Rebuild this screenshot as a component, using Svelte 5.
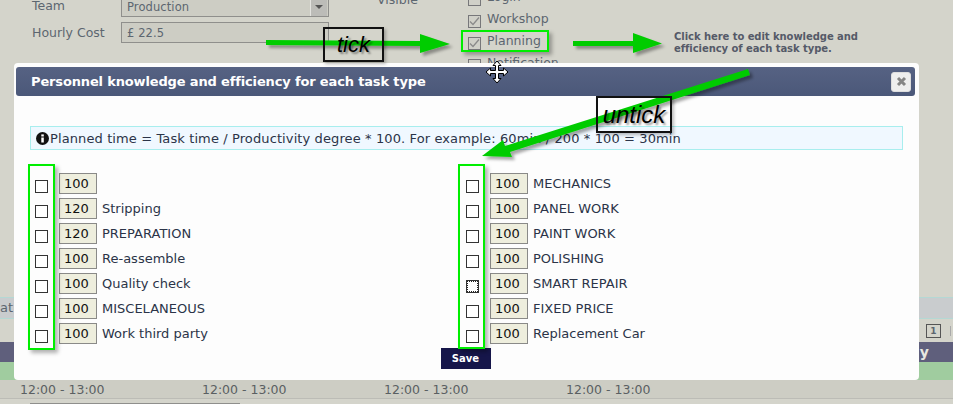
<script>
  const visibleIn = [
    { name: 'Login', on: false },
    { name: 'Workshop', on: true },
    { name: 'Planning', on: true },
    { name: 'Notification', on: false }
  ]
  const left = [
    { name: '', val: 100 },
    { name: 'Stripping', val: 120 },
    { name: 'PREPARATION', val: 120 },
    { name: 'Re-assemble', val: 100 },
    { name: 'Quality check', val: 100 },
    { name: 'MISCELANEOUS', val: 100 },
    { name: 'Work third party', val: 100 }
  ]
  const right = [
    { name: 'MECHANICS', val: 100 },
    { name: 'PANEL WORK', val: 100 },
    { name: 'PAINT WORK', val: 100 },
    { name: 'POLISHING', val: 100 },
    { name: 'SMART REPAIR', val: 100, focus: true },
    { name: 'FIXED PRICE', val: 100 },
    { name: 'Replacement Car', val: 100 }
  ]
  const columns = [left, right]
  const times = [0, 1, 2, 3]
</script>

<div class="page">
  <section class="form">
    <div class="fields">
      <div class="label">Team</div>
      <div class="select">Production<span class="drop"><i></i></span></div>
      <div class="label">Hourly Cost</div>
      <div class="field">£ 22.5</div>
    </div>
    <div class="visible-label">Visible</div>
    <div class="checks">
      {#each visibleIn as item}
        <div class="check">
          <span class="box">
            {#if item.on}
              <svg width="11" height="11" viewBox="0 0 11 11"><path d="M1 5.5 L4 8.5 L10 1.5" fill="none" stroke="#8a8a8a" stroke-width="1.3" /></svg>
            {/if}
          </span>
          {item.name}
        </div>
      {/each}
    </div>
  </section>

  <section class="table">
    <div class="days"><span>at</span></div>
    <div class="pager"><span class="num">1</span><span class="sep"></span></div>
    <div class="head"><span>y</span></div>
    <div class="green"></div>
    <div class="hours">
      {#each times as t}
        <span>12:00 - 13:00</span>
      {/each}
    </div>
    <div class="next"><span class="next-input"></span></div>
  </section>

  <div class="modal">
    <header class="title">
      <span>Personnel knowledge and efficiency for each task type</span>
      <button class="close" aria-label="Close">
        <svg width="11" height="11" viewBox="0 0 11 11"><path d="M2 2 L9 9 M9 2 L2 9" stroke="#858585" stroke-width="3" /></svg>
      </button>
    </header>
    <div class="notice">
      <svg width="13" height="13" viewBox="0 0 13 13"><circle cx="6.5" cy="6.5" r="6.5" fill="#111" /><rect x="5.3" y="5.5" width="2.5" height="5" fill="#fff" /><rect x="5.3" y="2.4" width="2.5" height="2.1" fill="#fff" /></svg>
      <span>Planned time = Task time / Productivity degree * 100. For example: 60min / 200 * 100 = 30min</span>
    </div>
    <div class="types">
      {#each columns as col}
        <div class="col">
          {#each col as row}
            <div class="row">
              <span class="tick" class:focus={row.focus}></span>
              <input class="num-input" value={row.val} />
              <span class="name">{row.name}</span>
            </div>
          {/each}
        </div>
      {/each}
    </div>
    <button class="save">Save</button>
  </div>

  <!-- annotations drawn on top of the screenshot -->
  <div class="mark planning"></div>
  <div class="mark left-col"></div>
  <div class="mark right-col"></div>
  <svg class="arrows" width="953" height="404" viewBox="0 0 953 404">
    <defs>
      <filter id="sh" x="-10%" y="-30%" width="120%" height="180%">
        <feDropShadow dx="3" dy="3" stdDeviation="1.6" flood-color="#000" flood-opacity="0.35" />
      </filter>
    </defs>
    <g fill="#00cc00" filter="url(#sh)">
      <path d="M266 40 L420 41 L420 34 L450 44 L420 53 L420 46 L266 45 Z" />
      <path d="M573 41 L633 41 L633 33 L662 43.5 L633 53 L633 46 L573 46 Z" />
      <path d="M748 69 L750 75 L510 152 L512 157 L482 156 L503 140 L505 146 Z" />
    </g>
  </svg>
  <div class="note tick-note">tick</div>
  <div class="note untick-note">untick</div>
  <div class="hint">Click here to edit knowledge and<br />efficiency of each task type.</div>
  <svg class="cursor" width="24" height="24" viewBox="0 0 24 24">
    <path d="M12 1 L16 5.5 L13.5 5.5 L13.5 10.5 L18.5 10.5 L18.5 8 L23 12 L18.5 16 L18.5 13.5 L13.5 13.5 L13.5 18.5 L16 18.5 L12 23 L8 18.5 L10.5 18.5 L10.5 13.5 L5.5 13.5 L5.5 16 L1 12 L5.5 8 L5.5 10.5 L10.5 10.5 L10.5 5.5 L8 5.5 Z" fill="#fff" stroke="#000" stroke-width="1" />
  </svg>
</div>

<style>
  :global(body) {
    margin: 0;
    background: #d4d4cb;
  }

  .page {
    position: relative;
    width: 953px;
    height: 404px;
    overflow: hidden;
    background: #d4d4cb;
    font-family: "DejaVu Sans", Verdana, sans-serif;
    font-size: 13px;
    color: #5c6670;
  }

  .form {
    display: flex;
    height: 302px;
    margin-top: -5px;
    padding-left: 32px;
  }

  .fields {
    display: grid;
    grid-template-columns: 89px 208px;
    grid-template-rows: 22px 22px;
    row-gap: 5px;
    align-items: start;
    align-content: start;
  }

  .label {
    font-size: 12.5px;
    line-height: 22px;
  }

  .select,
  .field {
    box-sizing: border-box;
    height: 21px;
    border: 1px solid #8f8f8c;
    background: #cdcdc4;
    padding-left: 5px;
    font-size: 11.5px;
    letter-spacing: 0.1px;
    line-height: 20px;
    position: relative;
  }

  .select {
    height: 22px;
    line-height: 23px;
  }

  .drop {
    position: absolute;
    top: 1px;
    right: 1px;
    width: 16px;
    height: 19px;
    background: #bcbcb8;
    border-left: 1px solid #e4e4e0;
    display: grid;
    place-items: center;
  }

  .drop i {
    width: 0;
    height: 0;
    border-left: 4px solid transparent;
    border-right: 4px solid transparent;
    border-top: 4px solid #555;
  }

  .visible-label {
    margin-left: 48px;
    width: 91px;
    margin-top: -3px;
    font-size: 12.5px;
    line-height: 16px;
  }

  .checks {
    display: flex;
    flex-direction: column;
    gap: 6px;
    margin-top: -6px;
    font-size: 12.5px;
  }

  .check {
    display: flex;
    align-items: center;
    gap: 6px;
    height: 16px;
    line-height: 16px;
  }

  .box {
    box-sizing: border-box;
    width: 13px;
    height: 13px;
    margin-top: 4px;
    border: 1px solid #77777a;
    background: #d0d0c8;
    display: grid;
    place-items: center;
  }

  .table {
    display: flex;
    flex-direction: column;
  }

  .days {
    box-sizing: border-box;
    height: 22px;
    background: #c9ccce;
    border-top: 1px solid #b4d8d4;
    border-bottom: 1px solid #b4d8d4;
    line-height: 20px;
  }

  .pager {
    height: 23px;
    display: flex;
    justify-content: flex-end;
    align-items: center;
    gap: 9px;
    padding-right: 2px;
    box-sizing: border-box;
  }

  .num {
    box-sizing: border-box;
    width: 15px;
    height: 14px;
    border: 1px solid #555;
    font-size: 9px;
    font-weight: bold;
    line-height: 12px;
    text-align: center;
  }

  .sep {
    width: 1px;
    height: 10px;
    background: #aaa;
  }

  .head {
    height: 20px;
    background: #5f5f7c;
    color: #e8e8e0;
    font-weight: bold;
    font-size: 14px;
    line-height: 20px;
    text-align: right;
    padding-right: 24px;
  }

  .green {
    height: 18px;
    background: #a0cc9f;
  }

  .hours {
    height: 18px;
    background: #cdcdc4;
    border-bottom: 1px solid #bcbcb6;
    display: flex;
    padding-left: 20px;
    font-size: 12.5px;
    line-height: 19px;
    color: #5a5f62;
  }

  .hours span {
    width: 182px;
  }

  .next {
    padding-left: 30px;
    padding-top: 4px;
  }

  .next-input {
    display: block;
    width: 208px;
    height: 10px;
    border: 1px solid #8f8f8c;
    background: #cdcdc4;
  }

  .modal {
    position: absolute;
    left: 14px;
    top: 63px;
    width: 905px;
    height: 317px;
    box-sizing: border-box;
    padding: 4px 4px 0 2px;
    background: #fdfdfd;
    border-radius: 4px;
    color: #2b3448;
  }

  .title {
    height: 29px;
    padding: 0 4px 0 15px;
    border-radius: 3px;
    background: linear-gradient(#566283, #4b5879);
    color: #fff;
    font-weight: bold;
    letter-spacing: -0.15px;
    display: flex;
    justify-content: space-between;
    align-items: center;
  }

  .close {
    width: 20px;
    height: 20px;
    padding: 0;
    border: 1px solid #ddd;
    border-radius: 3px;
    background: #eeeeee;
    display: grid;
    place-items: center;
  }

  .notice {
    box-sizing: border-box;
    height: 24px;
    margin: 30px 12px 0 14px;
    padding-left: 5px;
    border: 1px solid #a8eeee;
    background: #f0f8ff;
    display: flex;
    align-items: center;
    gap: 1px;
    letter-spacing: 0.11px;
    white-space: nowrap;
  }

  .types {
    display: grid;
    grid-template-columns: 431px 431px;
    margin: 23px 0 0 19px;
  }

  .col {
    display: flex;
    flex-direction: column;
    gap: 4px;
  }

  .row {
    height: 21px;
    display: flex;
    align-items: center;
    position: relative;
  }

  .tick {
    box-sizing: border-box;
    width: 13px;
    height: 13px;
    margin: 6px 11px 0 0;
    border: 1px solid #333;
    background: #fff;
    flex: none;
  }

  .tick.focus {
    outline: 1px dotted #222;
    outline-offset: -2px;
  }

  .num-input {
    box-sizing: border-box;
    width: 38px;
    height: 21px;
    padding: 0 4px;
    margin: 0 5px 0 0;
    border: 1px solid #8a8a88;
    background: #eeeedd;
    color: #111;
    font: 13px "DejaVu Sans", Verdana, sans-serif;
  }

  .name {
    margin-top: -1px;
  }

  .save {
    display: block;
    width: 50px;
    height: 21px;
    margin: 4px auto 0;
    padding: 0;
    border: 0;
    background: #16164a;
    color: #fff;
    font: bold 10px "DejaVu Sans", Verdana, sans-serif;
  }

  .mark {
    position: absolute;
    box-sizing: border-box;
    border: 2.5px solid #00ee00;
    box-shadow: 3px 3px 4px rgba(0, 0, 0, 0.3);
  }

  .planning {
    left: 461px;
    top: 30px;
    width: 88px;
    height: 22px;
  }

  .left-col {
    left: 28px;
    top: 164px;
    width: 27px;
    height: 186px;
  }

  .right-col {
    left: 458px;
    top: 164px;
    width: 27px;
    height: 185px;
  }

  .arrows {
    position: absolute;
    left: 0;
    top: 0;
  }

  .note {
    position: absolute;
    box-sizing: border-box;
    border: 2px solid #111;
    color: #000;
    font: italic 22px "Liberation Sans", Arial, sans-serif;
    text-align: center;
    text-shadow: 2px 2px 2px rgba(0, 0, 0, 0.4);
    box-shadow: 2px 2px 3px rgba(0, 0, 0, 0.25);
  }

  .tick-note {
    left: 323px;
    top: 27px;
    width: 61px;
    height: 35px;
    line-height: 31px;
  }

  .untick-note {
    left: 596px;
    top: 96px;
    width: 76px;
    height: 37px;
    line-height: 33px;
    font-size: 24px;
  }

  .hint {
    position: absolute;
    left: 674px;
    top: 31px;
    font-size: 10px;
    font-weight: bold;
    letter-spacing: -0.06px;
    line-height: 12px;
    color: #555a68;
  }

  .cursor {
    position: absolute;
    left: 485px;
    top: 60px;
  }
</style>
